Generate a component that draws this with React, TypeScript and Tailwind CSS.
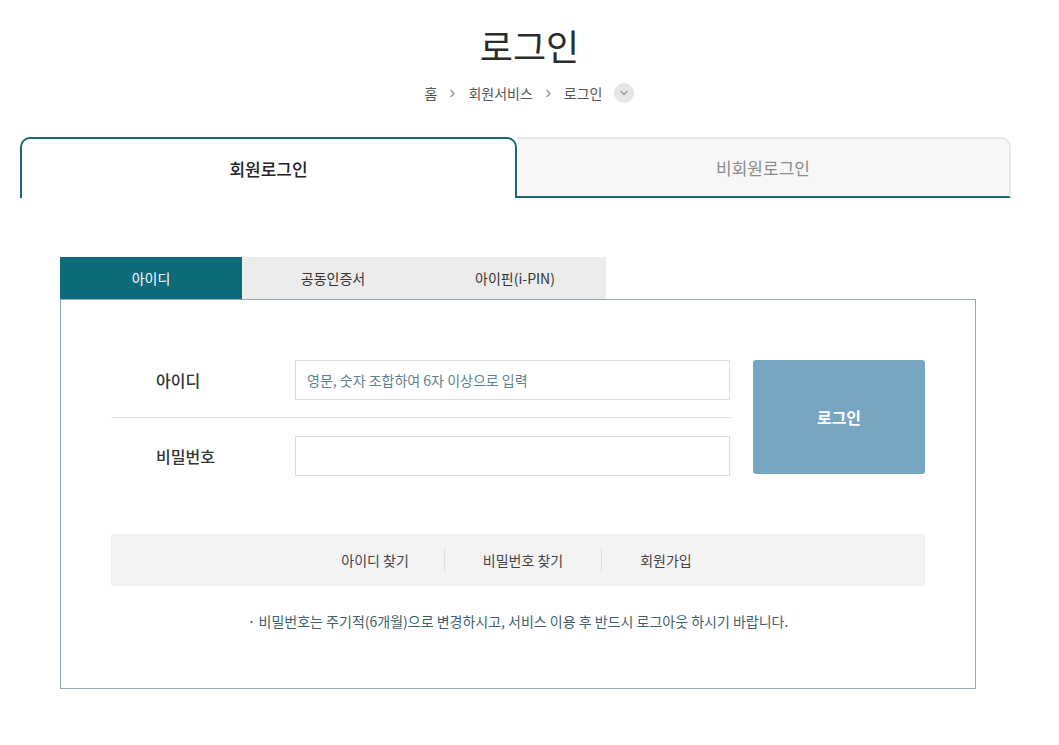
const FONT = "font-['Noto_Sans_CJK_KR','Noto_Sans',sans-serif]";

function ChevronCircle() {
  return (
    <span className="ml-3 inline-flex h-5 w-5 items-center justify-center rounded-full bg-[#e6e6e6]">
      <svg width="10" height="10" viewBox="0 0 10 10" fill="none" aria-hidden>
        <path d="M2 3.5 L5 6.5 L8 3.5" stroke="#9a9a9a" strokeWidth="1.4" strokeLinecap="round" strokeLinejoin="round" />
      </svg>
    </span>
  );
}

function Sep() {
  return (
    <svg className="mx-[12px]" width="7" height="9" viewBox="0 0 7 9" fill="none" aria-hidden>
      <path d="M1.5 1 L5 4.5 L1.5 8" stroke="#8a8a8a" strokeWidth="1.1" />
    </svg>
  );
}

export default function App() {
  return (
    <main className={`${FONT} min-h-screen bg-white text-[#333]`}>
      {/* heading */}
      <div className="flex flex-col items-center pt-[22px]">
        <h1 className="text-[36px] leading-[46px] font-normal text-[#2b2b2b]">로그인</h1>
        <div className="mt-[15px] flex items-center text-[14px] leading-5 text-[#555]">
          <span>홈</span>
          <Sep />
          <span>회원서비스</span>
          <Sep />
          <span>로그인</span>
          <ChevronCircle />
        </div>
      </div>

      {/* member / guest tabs */}
      <div className="mx-[20px] mt-[34px] flex w-[991px]">
        <button className="h-[61px] w-[497px] rounded-t-[10px] border-2 border-b-0 border-[#1d6670] bg-white text-[17px] font-medium text-[#222]">
          회원로그인
        </button>
        <button className="h-[61px] flex-1 rounded-tr-[10px] border-t-2 border-r-2 border-b-2 border-t-[#e6e8e8] border-r-[#e6e8e8] border-b-[#1d6670] bg-[#f7f7f7] text-[17px] text-[#8d8d8d]">
          비회원로그인
        </button>
      </div>

      <div className="mx-[60px] mt-[59px] w-[916px]">
        {/* method tabs */}
        <div className="flex text-[14px]">
          <button className="h-[42px] w-[182px] bg-[#0d6b7c] text-white">아이디</button>
          <button className="h-[42px] w-[182px] bg-[#ececec] text-[#333]">공동인증서</button>
          <button className="h-[42px] w-[182px] bg-[#ececec] text-[#333]">아이핀(i-PIN)</button>
        </div>

        {/* form box */}
        <div className="border border-[#8eacbc] px-[50px] pt-[60px] pb-[57px]">
          <div className="flex gap-[22px]">
            <div className="w-[620px]">
              <div className="flex items-center pb-[17px] border-b border-[#e2e2e2]">
                <label className="w-[184px] pl-[45px] text-[16px] font-medium text-[#333]">아이디</label>
                <input
                  className="h-[40px] w-[435px] border border-[#dcdcdc] px-[11px] text-[14px] outline-none placeholder:text-[#5f7f8c]"
                  placeholder="영문, 숫자 조합하여 6자 이상으로 입력"
                />
              </div>
              <div className="flex items-center pt-[18px]">
                <label className="w-[184px] pl-[45px] text-[16px] font-medium text-[#333]">비밀번호</label>
                <input type="password" className="h-[40px] w-[435px] border border-[#dcdcdc] px-[11px] text-[14px] outline-none" />
              </div>
            </div>
            <button className="h-[114px] w-[172px] rounded-[3px] bg-[#77a6c2] text-[16px] font-bold text-white">
              로그인
            </button>
          </div>

          {/* links */}
          <div className="mt-[58px] flex h-[52px] items-center justify-center bg-[#f3f3f3] text-[14px] text-[#444]">
            <a className="px-[35px]">아이디 찾기</a>
            <span className="h-[24px] w-px bg-[#dddddd]" />
            <a className="px-[38px]">비밀번호 찾기</a>
            <span className="h-[24px] w-px bg-[#dddddd]" />
            <a className="px-[38px]">회원가입</a>
          </div>

          <p className="mt-[25px] text-center text-[14px] leading-5 text-[#3d5f6e]">
            · 비밀번호는 주기적(6개월)으로 변경하시고, 서비스 이용 후 반드시 로그아웃 하시기 바랍니다.
          </p>
        </div>
      </div>
    </main>
  );
}
